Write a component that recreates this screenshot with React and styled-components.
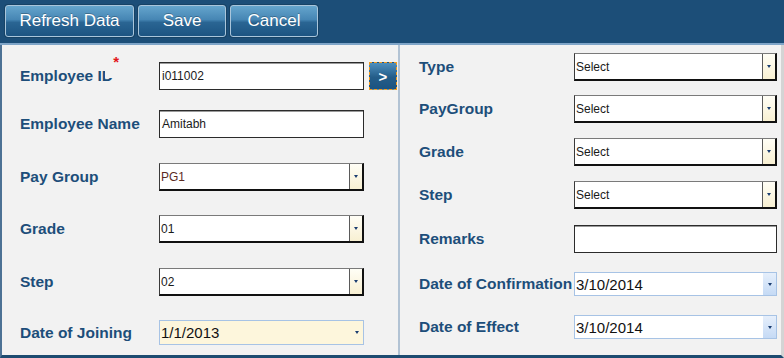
import styled, { createGlobalStyle } from 'styled-components';

const GlobalStyle = createGlobalStyle`
  html, body {
    margin: 0;
    padding: 0;
    background: #ffffff;
  }
  body {
    font-family: "Liberation Sans", Arial, sans-serif;
  }
`;

const Page = styled.div`
  width: 784px;
  height: 358px;
  display: flex;
  flex-direction: column;
  overflow: hidden;
  font-family: "Liberation Sans", Arial, sans-serif;
`;

const TopBar = styled.div`
  height: 45px;
  box-sizing: border-box;
  flex-shrink: 0;
  display: flex;
  align-items: flex-start;
  gap: 4px;
  padding: 5px 0 0 5px;
  background: #1c4e78;
  border-bottom: 2px solid #7fa5c8;
`;

const BarButton = styled.button`
  width: ${(p) => p.$w}px;
  height: 32px;
  padding: 0;
  border: 1px solid #a9c5db;
  border-radius: 3px;
  box-shadow: 0 0 0 1px #174366;
  background: linear-gradient(to bottom, #65a5cd 0%, #4686b4 45%, #2a6593 55%, #1c5482 100%);
  color: #ffffff;
  font-family: "Liberation Sans", Arial, sans-serif;
  font-size: 17px;
  text-shadow: 0 -1px 0 rgba(0, 0, 0, 0.25);
`;

const Body = styled.div`
  flex: 1;
  display: flex;
  background: #f2f2f2;
  border-left: 2px solid #4d7295;
  border-bottom: 3px solid #1d4b70;
  border-right: 3px solid #d4d4d4;
`;

const LeftPanel = styled.div`
  width: 398px;
  flex-shrink: 0;
  box-sizing: border-box;
  padding: 17px 0 0 18px;
  border-right: 2px solid #b2c3d4;
  display: flex;
  flex-direction: column;
`;

const RightPanel = styled.div`
  flex: 1;
  padding: 8px 0 0 19px;
  display: flex;
  flex-direction: column;
`;

const Row = styled.div`
  display: flex;
  align-items: center;
  height: ${(p) => p.$h || 28}px;
  margin-top: ${(p) => p.$gap || 0}px;
`;

const Label = styled.div`
  position: relative;
  width: ${(p) => p.$w}px;
  flex-shrink: 0;
  color: #1d4e7a;
  font-size: 15.5px;
  font-weight: bold;
  white-space: nowrap;
`;

const Required = styled.span`
  position: absolute;
  left: 85px;
  top: -11px;
  width: 14px;
  height: 22px;
  background: #f2f2f2;
  color: #e3171b;
  font-size: 15px;
  line-height: 12px;
  text-align: right;
`;

const TextBox = styled.div`
  width: ${(p) => p.$w}px;
  height: 28px;
  box-sizing: border-box;
  display: flex;
  align-items: center;
  padding-left: 2px;
  background: #ffffff;
  border: 1px solid #2b2b2b;
  box-shadow: inset 0 1px 0 #9a9a9a;
  color: #1a1a1a;
  font-size: 12px;
`;

const SelectBox = styled.div`
  width: ${(p) => p.$w}px;
  height: 28px;
  box-sizing: border-box;
  display: flex;
  align-items: stretch;
  background: #ffffff;
  border: 1px solid #3a3a3a;
  border-top-color: #7a7a7a;
  border-right: 2px solid #111111;
  border-bottom: 2px solid #111111;
  font-size: 12px;
  color: ${(p) => p.$color || '#1a1a1a'};
`;

const SelectText = styled.span`
  flex: 1;
  display: flex;
  align-items: center;
  padding-left: 1px;
`;

const SelectDrop = styled.span`
  width: 12px;
  display: flex;
  align-items: center;
  justify-content: center;
  background: linear-gradient(to bottom, #fffef6, #f8f0d2);
  border-left: 1px solid #5a5a5a;
  &::after {
    content: '';
    border-left: 2px solid transparent;
    border-right: 2px solid transparent;
    border-top: 3px solid #1a3d70;
  }
`;

const DateBox = styled.div`
  width: ${(p) => p.$w}px;
  height: ${(p) => p.$h}px;
  box-sizing: border-box;
  display: flex;
  align-items: stretch;
  background: ${(p) => (p.$cream ? '#fdf6dc' : '#ffffff')};
  border: 1px solid #a7c3e5;
  color: #111111;
  font-size: 15px;
`;

const DateText = styled.span`
  flex: 1;
  display: flex;
  align-items: center;
  padding-left: 1px;
`;

const DateDrop = styled.span`
  width: 13px;
  display: flex;
  align-items: center;
  justify-content: center;
  background: ${(p) => (p.$plain ? 'transparent' : 'linear-gradient(to bottom, #e6effb, #c5daf5)')};
  &::after {
    content: '';
    border-left: 2px solid transparent;
    border-right: 2px solid transparent;
    border-top: 3px solid #1a3d70;
  }
`;

const GoButton = styled.button`
  width: 28px;
  height: 28px;
  margin-left: 5px;
  padding: 0;
  box-sizing: border-box;
  border: 1px dashed #f29b1f;
  background: linear-gradient(to bottom, #4f8fbe, #245d89 55%, #1b5380);
  color: #ffffff;
  font-family: "Liberation Sans", Arial, sans-serif;
  font-size: 15px;
  font-weight: bold;
`;

const LEFT_LABEL = 139;
const LEFT_FIELD = 205;
const RIGHT_LABEL = 155;
const RIGHT_FIELD = 203;

export default function App() {
  return (
    <Page>
      <GlobalStyle />
      <TopBar>
        <BarButton $w={129}>Refresh Data</BarButton>
        <BarButton $w={88}>Save</BarButton>
        <BarButton $w={88}>Cancel</BarButton>
      </TopBar>
      <Body>
        <LeftPanel>
          <Row>
            <Label $w={LEFT_LABEL}>
              Employee ID
              <Required>*</Required>
            </Label>
            <TextBox $w={LEFT_FIELD}>i011002</TextBox>
            <GoButton>&gt;</GoButton>
          </Row>
          <Row $gap={20}>
            <Label $w={LEFT_LABEL}>Employee Name</Label>
            <TextBox $w={LEFT_FIELD}>Amitabh</TextBox>
          </Row>
          <Row $gap={25}>
            <Label $w={LEFT_LABEL}>Pay Group</Label>
            <SelectBox $w={LEFT_FIELD} $color="#5b2a1f">
              <SelectText>PG1</SelectText>
              <SelectDrop />
            </SelectBox>
          </Row>
          <Row $gap={24}>
            <Label $w={LEFT_LABEL}>Grade</Label>
            <SelectBox $w={LEFT_FIELD}>
              <SelectText>01</SelectText>
              <SelectDrop />
            </SelectBox>
          </Row>
          <Row $gap={25}>
            <Label $w={LEFT_LABEL}>Step</Label>
            <SelectBox $w={LEFT_FIELD}>
              <SelectText>02</SelectText>
              <SelectDrop />
            </SelectBox>
          </Row>
          <Row $gap={24} $h={25}>
            <Label $w={LEFT_LABEL}>Date of Joining</Label>
            <DateBox $w={LEFT_FIELD} $h={25} $cream>
              <DateText>1/1/2013</DateText>
              <DateDrop $plain />
            </DateBox>
          </Row>
        </LeftPanel>
        <RightPanel>
          <Row>
            <Label $w={RIGHT_LABEL}>Type</Label>
            <SelectBox $w={RIGHT_FIELD}>
              <SelectText>Select</SelectText>
              <SelectDrop />
            </SelectBox>
          </Row>
          <Row $gap={14}>
            <Label $w={RIGHT_LABEL}>PayGroup</Label>
            <SelectBox $w={RIGHT_FIELD}>
              <SelectText>Select</SelectText>
              <SelectDrop />
            </SelectBox>
          </Row>
          <Row $gap={15}>
            <Label $w={RIGHT_LABEL}>Grade</Label>
            <SelectBox $w={RIGHT_FIELD}>
              <SelectText>Select</SelectText>
              <SelectDrop />
            </SelectBox>
          </Row>
          <Row $gap={15}>
            <Label $w={RIGHT_LABEL}>Step</Label>
            <SelectBox $w={RIGHT_FIELD}>
              <SelectText>Select</SelectText>
              <SelectDrop />
            </SelectBox>
          </Row>
          <Row $gap={16}>
            <Label $w={RIGHT_LABEL}>Remarks</Label>
            <TextBox $w={RIGHT_FIELD} />
          </Row>
          <Row $gap={19} $h={24}>
            <Label $w={RIGHT_LABEL}>Date of Confirmation</Label>
            <DateBox $w={RIGHT_FIELD} $h={24}>
              <DateText>3/10/2014</DateText>
              <DateDrop />
            </DateBox>
          </Row>
          <Row $gap={19} $h={24}>
            <Label $w={RIGHT_LABEL}>Date of Effect</Label>
            <DateBox $w={RIGHT_FIELD} $h={24}>
              <DateText>3/10/2014</DateText>
              <DateDrop />
            </DateBox>
          </Row>
        </RightPanel>
      </Body>
    </Page>
  );
}
